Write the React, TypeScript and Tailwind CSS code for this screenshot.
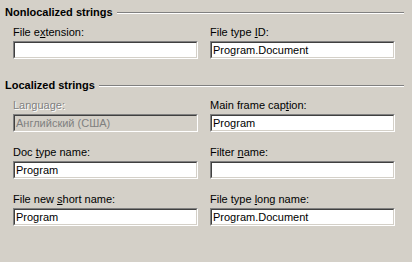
import React from "react";

const Heading = ({ text }: { text: string }) => (
  <div className="flex items-center pl-[5px] pr-[8px] h-[13px] leading-[13px]">
    <span className="font-bold text-black">{text}</span>
    <div className="flex-1 ml-[4px] border-t border-t-[#808080] border-b border-b-white" />
  </div>
);

const Field = ({
  label,
  value,
  disabled,
}: {
  label: React.ReactNode;
  value: string;
  disabled?: boolean;
}) => (
  <div className="flex flex-col">
    <div
      className={
        "h-[13px] leading-[13px] " +
        (disabled ? "text-[#808080] [text-shadow:1px_1px_0_#ffffff]" : "text-black")
      }
    >
      {label}
    </div>
    <div className="mt-[2px] h-[18px] border-t border-l border-t-[#808080] border-l-[#808080] border-b border-r border-b-white border-r-white">
      <div
        className={
          "h-full border-t border-l border-t-[#404040] border-l-[#404040] border-b border-r border-b-[#d4d0c8] border-r-[#d4d0c8] pl-[1px] leading-[14px] " +
          (disabled ? "bg-[#d4d0c8] text-[#808080]" : "bg-white text-black")
        }
      >
        {value}
      </div>
    </div>
  </div>
);

export default function App() {
  return (
    <div
      className="w-[412px] h-[262px] bg-[#d4d0c8] text-[11px] overflow-hidden pt-[6px]"
      style={{ fontFamily: '"Liberation Sans", Arial, sans-serif' }}
    >
      <Heading text="Nonlocalized strings" />
      <div className="grid grid-cols-[185px_185px] gap-x-[12px] pl-[13px] mt-[7px]">
        <Field label={<>File e<u>x</u>tension:</>} value="" />
        <Field label={<>File type <u>I</u>D:</>} value="Program.Document" />
      </div>
      <div className="mt-[20px]">
        <Heading text="Localized strings" />
      </div>
      <div className="grid grid-cols-[185px_185px] gap-x-[12px] gap-y-[14px] pl-[13px] mt-[7px]">
        <Field label={<>Language:</>} value="Английский (США)" disabled />
        <Field label={<>Main frame cap<u>t</u>ion:</>} value="Program" />
        <Field label={<>Doc <u>t</u>ype name:</>} value="Program" />
        <Field label={<>Filter <u>n</u>ame:</>} value="" />
        <Field label={<>File new <u>s</u>hort name:</>} value="Program" />
        <Field label={<>File type <u>l</u>ong name:</>} value="Program.Document" />
      </div>
    </div>
  );
}
